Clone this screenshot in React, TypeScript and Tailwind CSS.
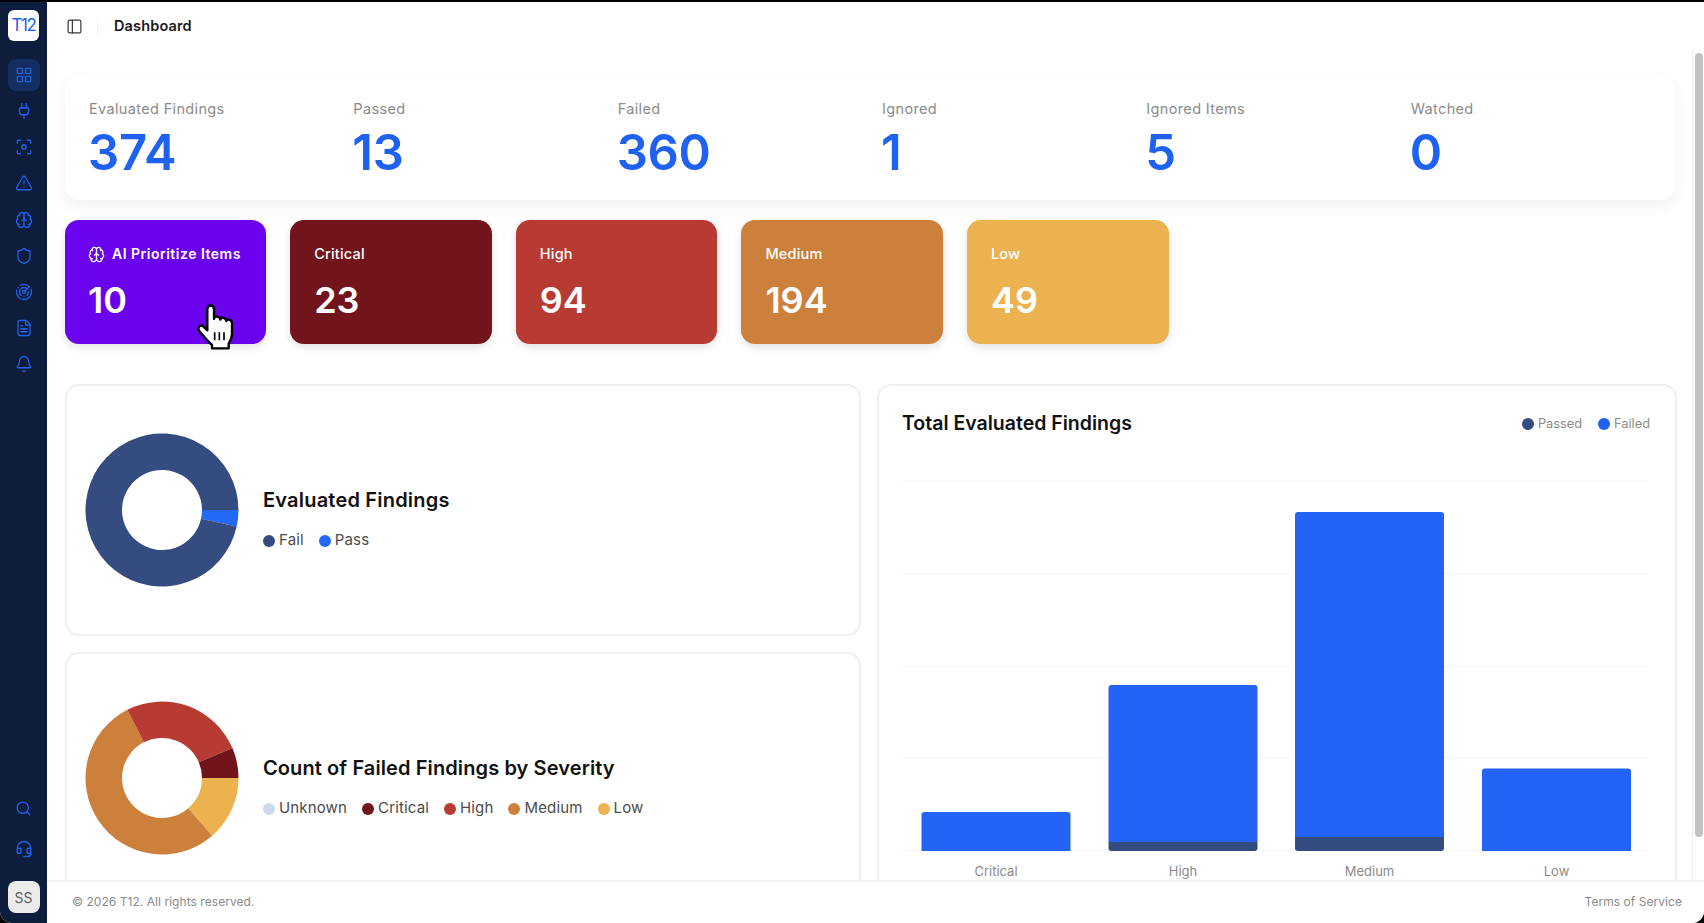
import { Bell, Brain, FileText, Focus, Headset, LayoutGrid, PanelLeft, Plug, Radar, Search, Shield, TriangleAlert } from "lucide-react";

const font = "font-['Inter','Liberation_Sans',sans-serif]";

const navIcons = [Plug, Focus, TriangleAlert, Brain, Shield, Radar, FileText, Bell];

const stats = [
  { label: "Evaluated Findings", value: 374 },
  { label: "Passed", value: 13 },
  { label: "Failed", value: 360 },
  { label: "Ignored", value: 1 },
  { label: "Ignored Items", value: 5 },
  { label: "Watched", value: 0 },
];

const severities = [
  { label: "Critical", value: 23, bg: "bg-[#72141b]" },
  { label: "High", value: 94, bg: "bg-[#b83b33]" },
  { label: "Medium", value: 194, bg: "bg-[#cd803b]" },
  { label: "Low", value: 49, bg: "bg-[#ebb24f]" },
];

const bars = [
  { label: "Critical", x: 921.5, top: 813, split: 852 },
  { label: "High", x: 1108.5, top: 686, split: 843 },
  { label: "Medium", x: 1295, top: 513, split: 838 },
  { label: "Low", x: 1482, top: 769.5, split: 852 },
];

const arc = (from: number, to: number) => {
  const R = 76.5;
  const r = 40;
  const c = 77;
  const a = (from * Math.PI) / 180;
  const b = (to * Math.PI) / 180;
  const large = to - from > 180 ? 1 : 0;
  const p = (rad: number, ang: number) => `${c + rad * Math.cos(ang)} ${c + rad * Math.sin(ang)}`;
  return `M${p(R, a)} A${R} ${R} 0 ${large} 1 ${p(R, b)} L${p(r, b)} A${r} ${r} 0 ${large} 0 ${p(r, a)} Z`;
};

const Donut = ({ parts }: { parts: { value: number; color: string }[] }) => {
  const total = parts.reduce((s, p) => s + p.value, 0);
  let at = 0;
  return (
    <svg width="154" height="154" viewBox="0 0 154 154" className="shrink-0">
      {parts.map((p) => {
        const from = at;
        at += (p.value / total) * 360;
        return <path key={p.color} d={arc(from, at)} fill={p.color} />;
      })}
    </svg>
  );
};

const Legend = ({ items }: { items: { label: string; color: string }[] }) => (
  <div className="flex items-center gap-[15px]">
    {items.map((i) => (
      <div key={i.label} className="flex items-center gap-[4px]">
        <span className="w-3 h-3 rounded-full" style={{ background: i.color }} />
        <span className="text-[15px] tracking-[0.15px] text-[#4b4b4b]">{i.label}</span>
      </div>
    ))}
  </div>
);

const HandCursor = () => (
  <svg width="50" height="60" viewBox="0 0 150 180" className="absolute left-[125px] top-[75px]">
    <path
      d="M52 42C52 28 72 28 72 42V72C72 62 90 62 91 74C92 66 108 66 109 78C111 72 125 72 126 84V118C126 130 120 138 116 146V160H66V150C52 138 42 124 28 108C20 98 30 88 40 94L52 106Z"
      fill="#fff"
      stroke="#000"
      strokeWidth="7"
      strokeLinejoin="round"
    />
    <path d="M74 112v24M88 112v24M102 112v24" stroke="#000" strokeWidth="5" />
  </svg>
);

export default function App() {
  return (
    <div className={`h-[923px] w-full bg-black pt-[2px] overflow-hidden ${font}`}>
      <div className="flex h-[921px] bg-white rounded-b-[12px] overflow-hidden">
        {/* Sidebar */}
        <aside className="w-[47px] shrink-0 bg-[#0e1d3b] flex flex-col items-center">
          <div className="mt-[8px] w-[31px] h-[31px] rounded-[6px] bg-white flex items-center justify-center text-[17px] text-[#1f62f2] tracking-[-1.5px]">
            T12
          </div>
          <div className="mt-[18px] w-[32px] h-[32px] rounded-[8px] bg-[#142e61] flex items-center justify-center">
            <LayoutGrid className="w-[18px] h-[18px] text-[#2468f0]" strokeWidth={1.5} />
          </div>
          <div className="mt-[11px] flex flex-col items-center gap-[18.2px]">
            {navIcons.map((Icon, i) => (
              <Icon key={i} className="w-[18px] h-[18px] text-[#1f62f2]" strokeWidth={1.7} />
            ))}
          </div>
          <div className="mt-auto flex flex-col items-center">
            <Search className="w-[17px] h-[17px] text-[#1f62f2]" strokeWidth={1.8} />
            <Headset className="mt-[23px] w-[18px] h-[18px] text-[#1f62f2]" strokeWidth={1.8} />
            <div className="mt-[23px] mb-[10px] w-[32px] h-[32px] rounded-[8px] bg-[#ececec] flex items-center justify-center text-[14px] text-[#5c5c5c]">
              SS
            </div>
          </div>
        </aside>

        <div className="flex-1 min-w-0 flex flex-col">
          {/* Header */}
          <header className="h-[48px] shrink-0 flex items-center pl-[19px]">
            <PanelLeft className="w-[17px] h-[17px] text-[#3a3a3a]" strokeWidth={1.7} />
            <div className="ml-[14px] w-px h-[15px] bg-[#eeeeee]" />
            <h1 className="ml-[16px] text-[14.5px] tracking-[0.15px] font-semibold text-[#1b1b1b]">Dashboard</h1>
          </header>

          <div className="flex-1 min-h-0 flex">
            {/* Content */}
            <main className="flex-1 min-w-0 overflow-hidden pt-[26px] pl-[18px] pr-[17px]">
              <section className="h-[124px] rounded-[14px] bg-white shadow-[0_6px_16px_rgba(0,0,0,0.06)] pl-6 pt-[23px] grid grid-cols-6">
                {stats.map((s) => (
                  <div key={s.label}>
                    <div className="text-[14.5px] leading-[20px] tracking-[0.35px] text-[#8b8b8b]">{s.label}</div>
                    <div className="mt-[7px] -ml-[1px] text-[49px] leading-[54px] font-semibold text-[#1f62f2] tracking-[-0.3px]">{s.value}</div>
                  </div>
                ))}
              </section>

              <section className="mt-[20px] flex gap-[24px]">
                <div className="relative w-[201.2px] h-[124px] rounded-[14px] bg-[#6a02ee] shadow-[0_3px_8px_rgba(0,0,0,0.12)] px-[23px] pt-[24px] text-white">
                  <div className="flex items-center gap-[7px] text-[14px] leading-[20px] tracking-[0.5px] font-semibold whitespace-nowrap">
                    <Brain className="w-[17px] h-[17px] shrink-0" strokeWidth={1.8} />
                    AI Prioritize Items
                  </div>
                  <div className="mt-[15px] text-[36px] leading-[42px] font-semibold">10</div>
                  <HandCursor />
                </div>
                {severities.map((c) => (
                  <div key={c.label} className={`w-[201.6px] h-[124px] rounded-[14px] ${c.bg} shadow-[0_3px_8px_rgba(0,0,0,0.12)] px-[24px] pt-[24px] text-white`}>
                    <div className="text-[14.5px] leading-[20px] tracking-[0.2px] font-medium">{c.label}</div>
                    <div className="mt-[15px] text-[36px] leading-[42px] font-semibold">{c.value}</div>
                  </div>
                ))}
              </section>

              <section className="mt-[40px] grid grid-cols-[796px_1fr] gap-[16px]">
                <div className="flex flex-col gap-[16px]">
                  <div className="h-[252px] rounded-[14px] border-2 border-[#f0f0f0] flex items-center pl-[18px]">
                    <Donut parts={[{ value: 13, color: "#2468f6" }, { value: 360, color: "#344c80" }]} />
                    <div className="ml-[24px] pt-[19px]">
                      <h2 className="text-[20px] leading-[26px] tracking-[0.2px] font-semibold text-[#111111]">Evaluated Findings</h2>
                      <div className="mt-[16px]">
                        <Legend items={[{ label: "Fail", color: "#344c80" }, { label: "Pass", color: "#2468f6" }]} />
                      </div>
                    </div>
                  </div>
                  <div className="h-[252px] rounded-[14px] border-2 border-[#f0f0f0] flex items-center pl-[18px]">
                    <Donut
                      parts={[
                        { value: 49, color: "#ebb24f" },
                        { value: 194, color: "#cd803b" },
                        { value: 94, color: "#b83b33" },
                        { value: 23, color: "#72141b" },
                      ]}
                    />
                    <div className="ml-[24px] pt-[19px]">
                      <h2 className="text-[20px] leading-[26px] tracking-[0.1px] font-semibold text-[#111111]">Count of Failed Findings by Severity</h2>
                      <div className="mt-[16px]">
                        <Legend
                          items={[
                            { label: "Unknown", color: "#cfd8ec" },
                            { label: "Critical", color: "#72141b" },
                            { label: "High", color: "#b83b33" },
                            { label: "Medium", color: "#cd803b" },
                            { label: "Low", color: "#ebb24f" },
                          ]}
                        />
                      </div>
                    </div>
                  </div>
                </div>

                <div className="h-[519px] rounded-[14px] border-2 border-[#f0f0f0] pl-[23px] pr-[25px] pt-[24px]">
                  <div className="flex items-center justify-between">
                    <h2 className="text-[19.5px] leading-[26px] font-semibold text-[#111111]">Total Evaluated Findings</h2>
                    <div className="flex items-center gap-[16px] pt-[2px]">
                      {[
                        { label: "Passed", color: "#344c80" },
                        { label: "Failed", color: "#1f62f2" },
                      ].map((i) => (
                        <div key={i.label} className="flex items-center gap-[4px]">
                          <span className="w-3 h-3 rounded-full" style={{ background: i.color }} />
                          <span className="text-[12.8px] text-[#8a8a8a]">{i.label}</span>
                        </div>
                      ))}
                    </div>
                  </div>
                  <svg width="748" height="420" viewBox="902 460 748 420" className="mt-[23px] block">
                    {[482, 575, 667, 759, 851].map((y) => (
                      <line key={y} x1="902" x2="1649" y1={y} y2={y} stroke="#f4f4f4" />
                    ))}
                    {bars.map((b) => (
                      <g key={b.label}>
                        <path
                          d={`M${b.x} ${b.split}V${b.top + 3}q0 -3 3 -3H${b.x + 146}q3 0 3 3V${b.split}Z`}
                          fill="#2363f5"
                        />
                        {b.split < 852 && (
                          <path
                            d={`M${b.x} ${b.split}H${b.x + 149}V849q0 3 -3 3H${b.x + 3}q-3 0 -3 -3Z`}
                            fill="#344c80"
                          />
                        )}
                        <text x={b.x + 74.5} y="877" textAnchor="middle" fontSize="13" fill="#8a8a8a">{b.label}</text>
                      </g>
                    ))}
                  </svg>
                </div>
              </section>
            </main>

            {/* Scrollbar */}
            <div className="w-[12px] shrink-0 border-l border-[#eeeeee] pl-[2px] pt-[3px]">
              <div className="w-[8px] h-[784px] rounded-full bg-[#c2c2c2]" />
            </div>
          </div>

          {/* Footer */}
          <footer className="h-[43px] shrink-0 border-t-2 border-[#f1f1f1] bg-white flex items-center justify-between pl-[25px] pr-[22px] pb-[2px] text-[12px] tracking-[0.05px] text-[#8a8a8a] relative z-10">
            <span>© 2026 T12. All rights reserved.</span>
            <span>Terms of Service</span>
          </footer>
        </div>
      </div>
    </div>
  );
}
